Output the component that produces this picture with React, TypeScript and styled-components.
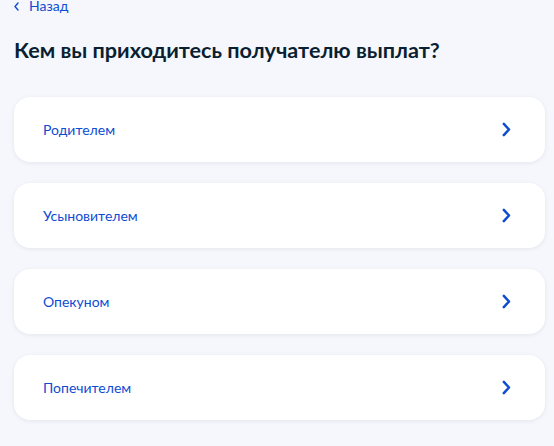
import React from 'react';
import styled, { createGlobalStyle } from 'styled-components';

const GlobalStyle = createGlobalStyle`
  html, body {
    margin: 0;
    padding: 0;
    background: #f5f7fc;
  }
  body {
    font-family: Lato, "Noto Sans", "Liberation Sans", sans-serif;
  }
`;

const Page = styled.div`
  width: 554px;
  height: 446px;
  overflow: hidden;
  box-sizing: border-box;
  padding: 0 9px 0 14px;
  background: #f5f7fc;
`;

const BackLink = styled.a`
  display: flex;
  align-items: center;
  gap: 9px;
  margin-top: -2px;
  height: 16px;
  font-size: 14px;
  line-height: 16px;
  color: #0d4cd3;
  text-decoration: none;
  cursor: pointer;
`;

const Title = styled.h1`
  margin: 22px 0 0;
  font-size: 21.6px;
  line-height: 29px;
  font-weight: 700;
  color: #0b1f33;
`;

const List = styled.div`
  margin-top: 32px;
  display: flex;
  flex-direction: column;
  gap: 21px;
`;

const Option = styled.button`
  display: flex;
  align-items: center;
  justify-content: space-between;
  height: 65px;
  padding: 0 34px 0 29px;
  border: none;
  border-radius: 16px;
  background: #ffffff;
  box-shadow: 0 1px 4px rgba(11, 31, 51, 0.08);
  font-family: inherit;
  font-size: 14px;
  color: #0d4cd3;
  cursor: pointer;
  text-align: left;
`;

const Chevron = () => (
  <svg width={9} height={15} viewBox="0 0 9 15" fill="none">
    <path d="M1.8 1.8 L7 7.5 L1.8 13.2" stroke="#0d4cd3" strokeWidth={2.5} strokeLinecap="round" strokeLinejoin="round" />
  </svg>
);

const SmallChevron = styled.span`
  display: inline-flex;
  width: 6px;
`;

const options = ['Родителем', 'Усыновителем', 'Опекуном', 'Попечителем'];

const App: React.FC = () => {
  return (
    <Page>
      <GlobalStyle />
      <BackLink>
        <SmallChevron>
          <svg width="5" height="9" viewBox="0 0 5 9" fill="none">
            <path d="M4 1 L1 4.5 L4 8" stroke="#0d4cd3" strokeWidth={1.4} strokeLinecap="round" strokeLinejoin="round" />
          </svg>
        </SmallChevron>
        Назад
      </BackLink>
      <Title>Кем вы приходитесь получателю выплат?</Title>
      <List>
        {options.map((o) => (
          <Option key={o}>
            {o}
            <Chevron />
          </Option>
        ))}
      </List>
    </Page>
  );
};

export default App;
